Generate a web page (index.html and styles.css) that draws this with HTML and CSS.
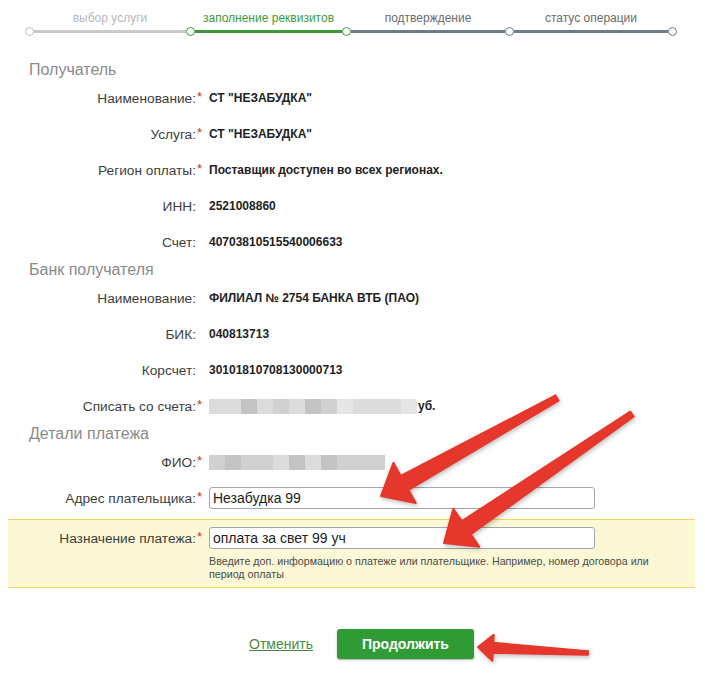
FILE: index.html
```html
<!DOCTYPE html>
<html lang="ru">
<head>
<meta charset="utf-8">
<title>Заполнение реквизитов</title>
<link rel="stylesheet" href="styles.css">
</head>
<body>
<div class="steps">
  <div class="step s1">
    <div class="step-label">выбор услуги</div>
    <div class="track"><span class="node"></span><span class="seg"></span></div>
  </div>
  <div class="step s2">
    <div class="step-label">заполнение реквизитов</div>
    <div class="track"><span class="node"></span><span class="seg"></span></div>
  </div>
  <div class="step s3">
    <div class="step-label">подтверждение</div>
    <div class="track"><span class="node"></span><span class="seg"></span></div>
  </div>
  <div class="step s4">
    <div class="step-label">статус операции</div>
    <div class="track"><span class="node"></span><span class="seg"></span></div>
  </div>
  <div class="step s5">
    <div class="step-label"></div>
    <div class="track"><span class="node"></span></div>
  </div>
</div>

<div class="form">
  <div class="sec-title">Получатель</div>
  <div class="row"><span class="lbl">Наименование:</span><span class="req">*</span><span class="val">СТ "НЕЗАБУДКА"</span></div>
  <div class="row"><span class="lbl">Услуга:</span><span class="req">*</span><span class="val">СТ "НЕЗАБУДКА"</span></div>
  <div class="row"><span class="lbl">Регион оплаты:</span><span class="req">*</span><span class="val">Поставщик доступен во всех регионах.</span></div>
  <div class="row"><span class="lbl">ИНН:</span><span class="req"></span><span class="val">2521008860</span></div>
  <div class="row"><span class="lbl">Счет:</span><span class="req"></span><span class="val">40703810515540006633</span></div>

  <div class="sec-title">Банк получателя</div>
  <div class="row"><span class="lbl">Наименование:</span><span class="req"></span><span class="val">ФИЛИАЛ № 2754 БАНКА ВТБ (ПАО)</span></div>
  <div class="row"><span class="lbl">БИК:</span><span class="req"></span><span class="val">040813713</span></div>
  <div class="row"><span class="lbl">Корсчет:</span><span class="req"></span><span class="val">30101810708130000713</span></div>
  <div class="row"><span class="lbl">Списать со счета:</span><span class="req">*</span>
    <span class="val blurred">
      <span class="px c1"></span><span class="px c1"></span><span class="px c3"></span><span class="px c1"></span><span class="px c2"></span><span class="px c1"></span><span class="px c3"></span><span class="px c2"></span><span class="px c0"></span><span class="px c1"></span><span class="px c1"></span><span class="px c1"></span><span class="px c0"></span><span class="tail">уб.</span>
    </span>
  </div>

  <div class="sec-title">Детали платежа</div>
  <div class="row"><span class="lbl">ФИО:</span><span class="req">*</span>
    <span class="val blurred">
      <span class="px c2"></span><span class="px c3"></span><span class="px c2"></span><span class="px c2"></span><span class="px c1"></span><span class="px c3"></span><span class="px c1"></span><span class="px c3"></span><span class="px c2"></span><span class="px c2"></span><span class="px c2"></span>
    </span>
  </div>
  <div class="row"><span class="lbl">Адрес плательщика:</span><span class="req">*</span><span class="val"><span class="input">Незабудка 99</span></span></div>

  <div class="band">
    <div class="row band-row"><span class="lbl">Назначение платежа:</span><span class="req">*</span><span class="val"><span class="input">оплата за свет 99 уч</span></span></div>
    <div class="hint">Введите доп. информацию о платеже или плательщике. Например, номер договора или<br>период оплаты</div>
  </div>

  <div class="actions">
    <a class="cancel" href="#">Отменить</a>
    <button class="go" type="button">Продолжить</button>
  </div>
</div>

<svg class="arrows" width="705" height="675" viewBox="0 0 705 675" xmlns="http://www.w3.org/2000/svg">
  <g class="arrow">
    <polygon points="555.5,395.4 400.7,475.9 393.4,462.8 381,496 415.8,503 408.5,489.9 558.5,400.6"/>
    <polygon points="630.3,411.5 461.8,521.1 453.3,508.7 444,543 479.3,546.7 470.8,534.3 633.7,416.5"/>
    <polygon points="588.1,651.2 493.3,642.8 493.7,634.8 478,647 492.3,660.8 492.7,652.8 587.9,654.8"/>
  </g>
</svg>
</body>
</html>
```
FILE: styles.css
```css
* { box-sizing: border-box; }

body {
  margin: 0;
  width: 705px;
  height: 675px;
  background: #fff;
  font-family: "Liberation Sans", Arial, sans-serif;
  color: #333;
  position: relative;
  overflow: hidden;
}

/* progress steps */
.steps {
  display: flex;
  padding: 10px 0 0 25px;
}
.step { display: flex; flex-direction: column; }
.s1 { width: 161px; }
.s2 { width: 156px; }
.s3 { width: 163px; }
.s4 { width: 163px; }
.s5 { width: 9px; }

.step-label {
  height: 16px;
  line-height: 16px;
  padding-left: 9px;
  font-family: "Liberation Sans", Arial, sans-serif;
  font-size: 12px;
  text-align: center;
  white-space: nowrap;
}
.track {
  display: flex;
  align-items: center;
  height: 10px;
}
.node {
  flex: none;
  width: 9px;
  height: 9px;
  border-radius: 50%;
  border: 1.5px solid;
  background: #fff;
}
.seg { flex: 1; height: 3px; }

.s1 .step-label { color: #b8b8b8; }
.s1 .node { border-color: #bdbdbd; }
.s1 .seg { background: #cacaca; }

.s2 .step-label { color: #3c9a3a; }
.s2 .node { border-color: #3c9a3a; }
.s2 .seg { background: #3c9a3a; }

.s3 .step-label { color: #6a6a6a; }
.s3 .node { border-color: #3c9a3a; }
.s3 .seg { background: #6e7b86; }

.s4 .step-label { color: #6a6a6a; }
.s4 .node { border-color: #6e7b86; }
.s4 .seg { background: #6e7b86; }

.s5 .node { border-color: #6e7b86; }

/* form */
.form { margin-top: 24px; }

.sec-title {
  height: 20px;
  line-height: 20px;
  padding-left: 29px;
  font-size: 16px;
  color: #8a8a8a;
}

.row {
  display: grid;
  grid-template-columns: 196px 13px 1fr;
  align-items: center;
  height: 36px;
}
.lbl {
  text-align: right;
  font-size: 13.7px;
  color: #3e3e3e;
  white-space: nowrap;
}
.req {
  color: #d42a2a;
  font-size: 13px;
  padding-left: 1px;
  align-self: center;
  margin-top: -3px;
}
.val {
  font-size: 12px;
  font-weight: bold;
  color: #222;
  white-space: nowrap;
}

.blurred {
  display: flex;
  align-items: center;
}
.px {
  display: block;
  width: 16px;
  height: 15px;
}
.c0 { background: #e6e6e6; }
.c1 { background: #dcdcdc; }
.c2 { background: #d1d1d1; }
.c3 { background: #c3c3c3; }
.tail {
  margin-left: 1px;
  font-size: 12px;
  font-weight: bold;
  color: #222;
}

.input {
  display: block;
  width: 386px;
  height: 22px;
  line-height: 20px;
  padding-left: 3px;
  border: 1px solid #9ea8b0;
  border-radius: 3px;
  background: #fff;
  font-size: 14px;
  font-weight: normal;
  color: #222;
}

/* highlighted row */
.band {
  margin: 3px 10px 0 8px;
  background: #fcf8d6;
  border-top: 1px solid #eed868;
  border-bottom: 1px solid #eed868;
  padding: 6px 0 6px;
}
.band-row {
  grid-template-columns: 188px 13px 1fr;
  height: 24px;
}
.hint {
  margin: 5px 0 0 201px;
  font-size: 10.7px;
  line-height: 13px;
  color: #4a4a4a;
}

/* buttons */
.actions {
  display: flex;
  align-items: center;
  gap: 24px;
  padding-left: 249px;
  margin-top: 41px;
}
.cancel {
  font-size: 14px;
  color: #4a8a3c;
  text-decoration: underline;
}
.go {
  width: 137px;
  height: 30px;
  border: none;
  border-radius: 3px;
  background: #2e9b35;
  color: #fff;
  font-family: "Liberation Sans", Arial, sans-serif;
  font-weight: bold;
  font-size: 14px;
  box-shadow: 0 1px 2px rgba(0, 0, 0, 0.35);
}

/* annotation arrows */
.arrows {
  position: absolute;
  left: 0;
  top: 0;
  pointer-events: none;
}
.arrow polygon {
  fill: #e5372b;
  stroke: #e5372b;
  stroke-width: 2;
  stroke-linejoin: round;
  filter: drop-shadow(1px 2px 2px rgba(0, 0, 0, 0.25));
}
```
